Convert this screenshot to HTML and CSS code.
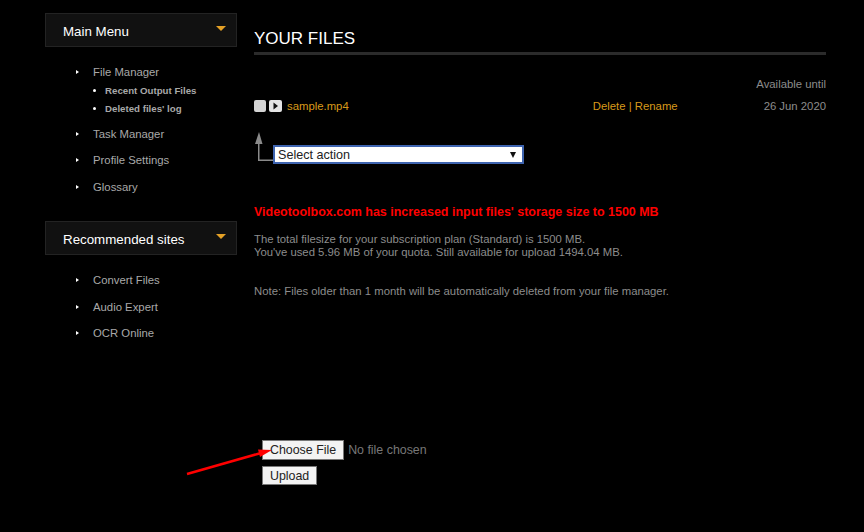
FILE: index.html
```html
<!DOCTYPE html>
<html lang="en">
<head>
<meta charset="utf-8">
<title>Your Files</title>
<link rel="stylesheet" href="styles.css">
</head>
<body>
<div class="page">
  <aside class="sidebar">
    <div class="panel-head"><span>Main Menu</span><i class="caret"></i></div>
    <ul class="nav">
      <li><a>File Manager</a>
        <ul class="subnav">
          <li>Recent Output Files</li>
          <li>Deleted files' log</li>
        </ul>
      </li>
      <li><a>Task Manager</a></li>
      <li><a>Profile Settings</a></li>
      <li><a>Glossary</a></li>
    </ul>
    <div class="panel-head"><span>Recommended sites</span><i class="caret"></i></div>
    <ul class="nav">
      <li><a>Convert Files</a></li>
      <li><a>Audio Expert</a></li>
      <li><a>OCR Online</a></li>
    </ul>
  </aside>
  <main class="content">
    <h1 class="title">YOUR FILES</h1>
    <div class="avail">Available until</div>
    <div class="file-row">
      <span class="check"></span>
      <span class="play"><svg width="7" height="8" viewBox="0 0 7 8"><path d="M1.500 0.500 6 4 1.500 7.500z" fill="#111"/></svg></span>
      <a class="file-name">sample.mp4</a>
      <span class="file-actions"><a>Delete</a> | <a>Rename</a></span>
      <span class="file-date">26 Jun 2020</span>
    </div>
    <div class="action-row">
      <svg class="bend" width="20" height="29" viewBox="0 0 20 29"><path d="M5 0 8.500 12H5.500V27.500H19V29H4V12H1z" fill="#8a8a8a"/></svg>
      <div class="select"><span>Select action</span><i class="select-arrow"></i></div>
    </div>
    <p class="notice">Videotoolbox.com has increased input files' storage size to 1500 MB</p>
    <p class="info">The total filesize for your subscription plan (Standard) is 1500 MB.<br>You've used 5.96 MB of your quota. Still available for upload 1494.04 MB.</p>
    <p class="note">Note: Files older than 1 month will be automatically deleted from your file manager.</p>
    <div class="upload">
      <div class="file-line"><button class="btn" type="button">Choose File</button><span class="no-file">No file chosen</span></div>
      <button class="btn btn-upload" type="button">Upload</button>
      <svg class="pointer" width="90" height="36" viewBox="0 0 90 36"><path d="M1 33 75 12" stroke="#f00" stroke-width="2.500" fill="none"/><path d="M86 9 72 8.500 74 16z" fill="#f00"/></svg>
    </div>
  </main>
</div>
</body>
</html>
```
FILE: styles.css
```css
* { box-sizing: border-box; }
html, body { margin: 0; height: 100%; background: #000; }
body { font-family: "Liberation Sans", Arial, sans-serif; font-size: 11.330px; color: #8c8c8c; overflow: hidden; }
.page { display: flex; width: 864px; height: 532px; padding: 13px 38px 0 45px; gap: 17px; }
.sidebar { width: 192px; flex: none; }
.panel-head { height: 34px; background: #111; border: 1px solid #232323; display: flex; align-items: center; justify-content: space-between; padding: 2px 10px 0 17px; color: #fff; font-size: 13.330px; }
.caret { width: 0; height: 0; border-left: 5px solid transparent; border-right: 5px solid transparent; border-top: 5px solid #e5a126; margin-top: -5px; }
.nav { list-style: none; margin: 0; padding: 18px 0 0 48px; height: 174px; }
.nav:last-child { height: auto; }
.nav > li { position: relative; margin-bottom: 12px; line-height: 14.500px; color: #a9a9a9; }
.nav > li::before { content: ""; position: absolute; left: -17px; top: 5px; border-left: 3px solid #fff; border-top: 2.500px solid transparent; border-bottom: 2.500px solid transparent; }
.subnav { list-style: none; margin: 2px 0 -3px; padding: 0 0 0 12px; font-size: 9.700px; font-weight: bold; color: #a9a9a9; }
.subnav li { position: relative; line-height: 18px; }
.subnav li::before { content: ""; position: absolute; left: -12px; top: 7px; width: 3px; height: 3px; border-radius: 50%; background: #fff; }
.content { flex: 1; min-width: 0; }
.title { margin: 15px 0 0; padding-bottom: 3px; border-bottom: 3px solid #2b2b2b; color: #fff; font-size: 17px; font-weight: normal; line-height: 21px; }
.avail { margin-top: 22px; text-align: right; line-height: 14px; }
.file-row { display: flex; align-items: center; height: 14px; margin-top: 8px; }
.check { width: 12px; height: 12px; background: #d4d4d4; border-radius: 2px; }
.play { width: 13px; height: 12px; margin-left: 3px; background: #e4e4e4; border-radius: 2px; display: flex; align-items: center; justify-content: center; }
.file-name { margin-left: 5px; color: #d8991a; }
.file-actions { margin-left: auto; color: #d8991a; margin-right: 86px; }
.file-date { color: #8c8c8c; }
.action-row { display: flex; align-items: flex-end; margin-top: 18px; height: 33px; }
.bend { flex: none; margin-bottom: 3px; margin-right: -1px; }
.select { width: 251px; height: 19px; background: #fff; border: 2px solid #3e64b0; color: #222; font-size: 12.600px; display: flex; align-items: center; justify-content: space-between; padding: 0 6px 0 3px; }
.select-arrow { border-left: 3.500px solid transparent; border-right: 3.500px solid transparent; border-top: 6px solid #111; }
.notice { margin: 41px 0 0; color: #f00; font-size: 12.480px; font-weight: bold; line-height: 14px; }
.info { margin: 14px 0 0; line-height: 13px; }
.note { margin: 25px 0 0; line-height: 14px; }
.upload { position: relative; margin: 142px 0 0 8px; }
.file-line { display: flex; align-items: center; margin-bottom: 6px; color: #777; font-size: 12.400px; }
.btn { display: block; height: 20px; padding: 0 7px; background: #f3f3f3; border: 1px solid #777; border-radius: 0; font: 12.400px "Liberation Sans", Arial, sans-serif; color: #222; }
.btn-upload { height: 19px; }
.no-file { margin-left: 4px; }
.pointer { position: absolute; left: -76px; top: 1px; }
```
